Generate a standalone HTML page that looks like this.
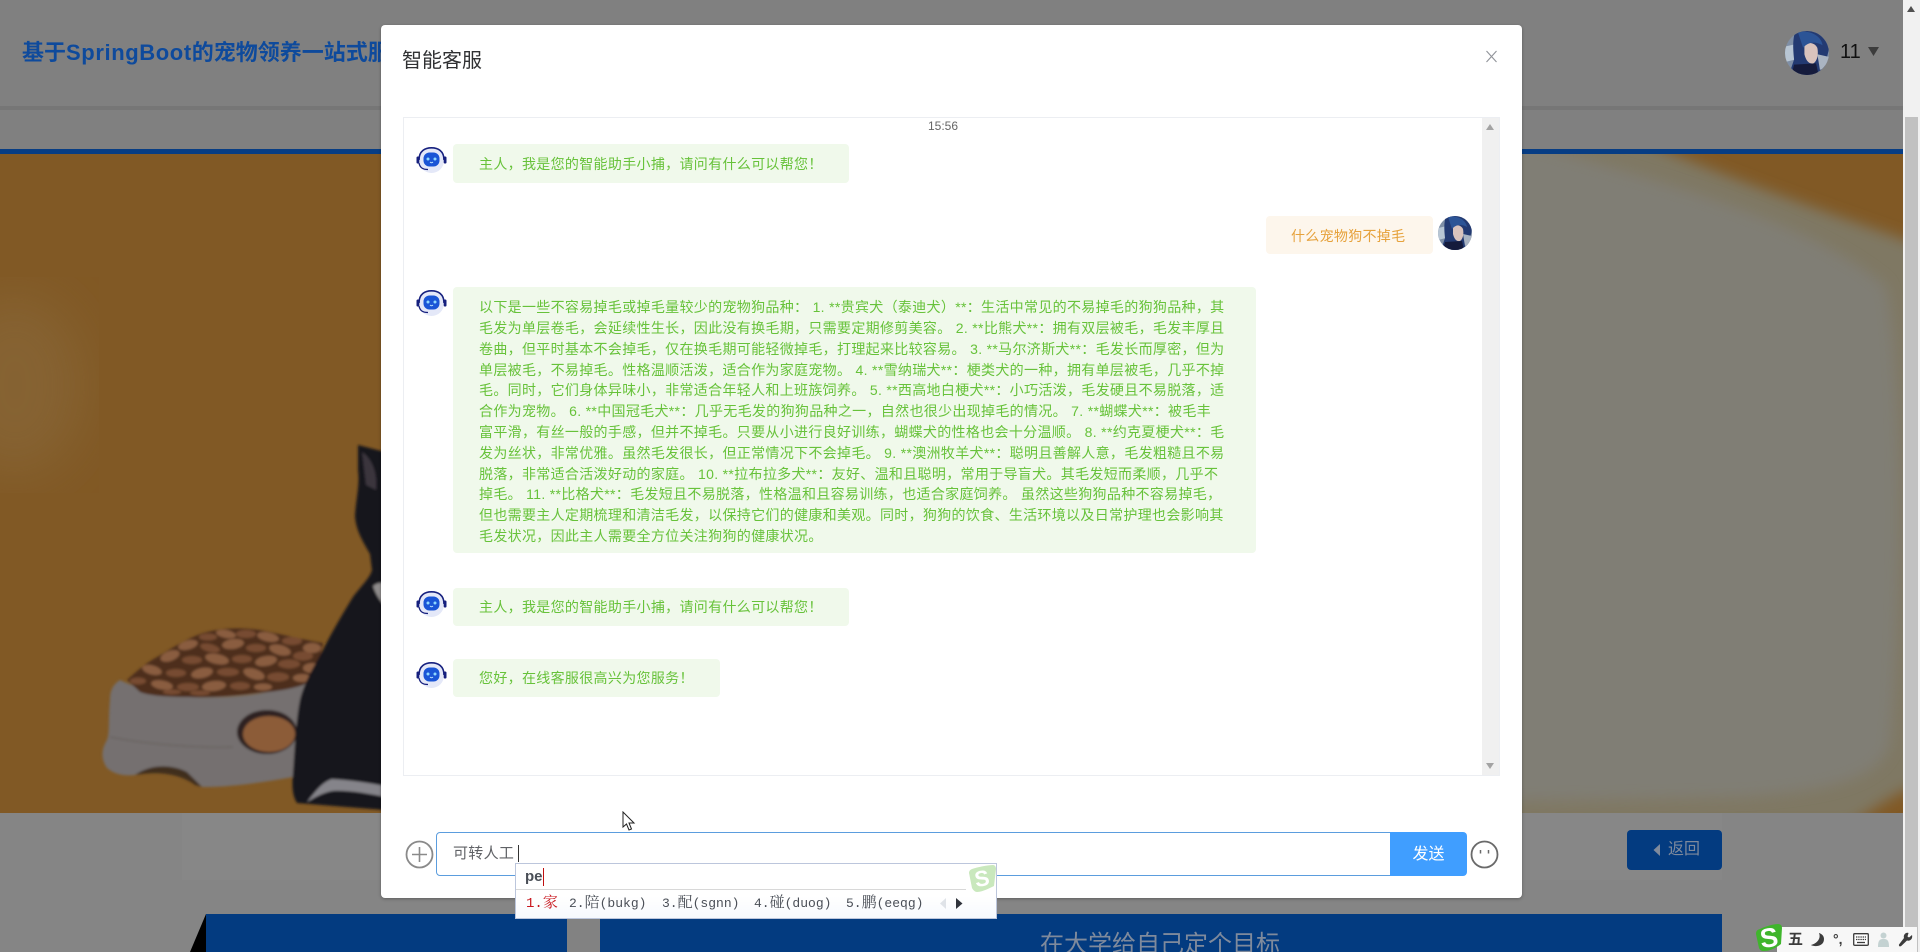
<!DOCTYPE html>
<html lang="zh-CN"><head><meta charset="utf-8"><title>智能客服</title>
<style>
html,body{margin:0;padding:0;width:1920px;height:952px;overflow:hidden;background:#858585}
*{box-sizing:border-box}
body{position:relative;font-family:"Liberation Sans","Noto Sans CJK SC",sans-serif;font-size:14px}
.a{position:absolute}
.t{position:absolute;white-space:nowrap}
.b{position:absolute;border-radius:4px}
.g{background:#f0f9eb;color:#67c23a}
.o{background:#fdf6ec;color:#e6a23c}
.l{position:absolute;left:479px;white-space:nowrap;line-height:21px;height:21px;color:#67c23a;letter-spacing:.32px}
.c{position:absolute;top:894px;line-height:20px;white-space:nowrap;font-family:"Liberation Mono","Noto Serif CJK SC",monospace;font-size:13px;color:#4a4f57}
.c i{font-style:normal;font-size:15px}
</style></head><body>

<!-- dimmed page behind -->
<div class="a" style="left:0;top:0;width:1903px;height:106px;background:#808080"></div>
<div class="a" style="left:0;top:106px;width:1903px;height:4px;background:#767676"></div>
<div class="a" style="left:0;top:110px;width:1903px;height:40px;background:#808080"></div>
<div class="a" style="left:0;top:149px;width:1903px;height:5px;background:#073d84"></div>

<svg class="a" style="left:0;top:0" width="1903" height="952" viewBox="0 0 1903 952">
<defs>
<filter id="bl" x="-10%" y="-10%" width="120%" height="120%"><feGaussianBlur stdDeviation="7"/></filter>
<filter id="bs" x="-5%" y="-5%" width="110%" height="110%"><feGaussianBlur stdDeviation="1.3"/></filter>
<filter id="bh"><feGaussianBlur stdDeviation="25"/></filter>
<clipPath id="imgc"><rect x="0" y="154" width="1903" height="659"/></clipPath>
</defs>
<g clip-path="url(#imgc)">
<rect x="0" y="154" width="1903" height="659" fill="#815925"/>
<ellipse cx="15" cy="385" rx="70" ry="90" fill="#8a6a3c" opacity=".55" filter="url(#bh)"/>
<!-- cream bed -->
<path d="M1000 140 L1640 140 C1720 175 1820 210 1920 245 L1920 785 C1900 790 1880 805 1850 825 L1000 825Z" fill="#7f7863" filter="url(#bl)"/>
<path d="M1000 130 L1520 140 C1650 180 1800 215 1885 285 C1903 340 1903 620 1890 745 C1878 782 1820 792 1740 797 L1000 810Z" fill="#807e75" filter="url(#bl)"/>
<!-- bowl -->
<g filter="url(#bs)">
<path d="M120 680 C112 685 110 692 110 700 C108 720 110 732 107 740 C102 748 100 758 107 768 C115 775 125 776 135 775 C150 766 172 766 187 773 C193 778 198 783 202 787 C235 787 265 782 293 777 L320 690 Q312 684 307 683 C250 700 170 705 120 680Z" fill="#75706f"/>
<path d="M110 737 C150 745 200 748 233 747" stroke="#6a6563" stroke-width="1.5" fill="none"/>
<path d="M135 775 C150 764 172 764 187 772 L202 787 L195 785 C180 774 160 771 135 775Z" fill="#3f2d1c"/>
<path d="M127 680 C140 668 148 662 157 657 C172 648 188 638 203 633 C220 628 240 627 260 630 C280 634 305 640 323 643 L317 673 L303 685 C288 690 270 692 257 693 C235 696 210 698 190 697 C170 697 150 696 140 692Z" fill="#4d2f1d"/>
<g fill="#8a5d40">
<ellipse cx="226" cy="634" rx="10" ry="4" transform="rotate(10 226 634)"/><ellipse cx="268" cy="637" rx="11" ry="4.5" transform="rotate(12 268 637)"/><ellipse cx="312" cy="648" rx="9" ry="5"/>
<ellipse cx="188" cy="645" rx="10" ry="4.5" transform="rotate(-15 188 645)"/><ellipse cx="233" cy="644" rx="11" ry="5" transform="rotate(-8 233 644)"/><ellipse cx="280" cy="650" rx="11" ry="5" transform="rotate(15 280 650)"/>
<ellipse cx="170" cy="656" rx="10" ry="5" transform="rotate(-20 170 656)"/><ellipse cx="217" cy="659" rx="12" ry="5" transform="rotate(12 217 659)"/><ellipse cx="266" cy="661" rx="11" ry="5" transform="rotate(-10 266 661)"/><ellipse cx="312" cy="668" rx="9" ry="5"/>
<ellipse cx="152" cy="670" rx="10" ry="4.5" transform="rotate(15 152 670)"/><ellipse cx="202" cy="673" rx="11" ry="5" transform="rotate(-12 202 673)"/><ellipse cx="254" cy="674" rx="11" ry="5" transform="rotate(18 254 674)"/><ellipse cx="302" cy="678" rx="9" ry="4"/>
<ellipse cx="162" cy="685" rx="11" ry="4.5" transform="rotate(10 162 685)"/><ellipse cx="214" cy="686" rx="12" ry="5" transform="rotate(-6 214 686)"/><ellipse cx="263" cy="687" rx="9" ry="3.5"/>
</g>
<g fill="#774b30">
<ellipse cx="208" cy="637" rx="9" ry="3.5"/><ellipse cx="246" cy="634" rx="10" ry="4"/><ellipse cx="292" cy="641" rx="10" ry="4"/>
<ellipse cx="210" cy="648" rx="10" ry="4" transform="rotate(14 210 648)"/><ellipse cx="256" cy="648" rx="10" ry="4"/><ellipse cx="303" cy="656" rx="10" ry="4.5"/>
<ellipse cx="192" cy="660" rx="10" ry="4"/><ellipse cx="242" cy="659" rx="10" ry="4"/><ellipse cx="289" cy="664" rx="11" ry="4.5"/>
<ellipse cx="176" cy="673" rx="10" ry="4"/><ellipse cx="228" cy="672" rx="11" ry="4"/><ellipse cx="278" cy="677" rx="11" ry="4.5"/>
<ellipse cx="138" cy="681" rx="8" ry="3.5"/><ellipse cx="188" cy="687" rx="11" ry="4"/><ellipse cx="240" cy="686" rx="10" ry="4"/>
<ellipse cx="172" cy="692" rx="9" ry="2.5"/><ellipse cx="200" cy="693" rx="10" ry="2.5"/>
</g>
<ellipse cx="267" cy="732" rx="30" ry="22" fill="#2f2320"/>
<ellipse cx="269" cy="734" rx="26" ry="18" fill="#8c5c38"/>
<!-- cat -->
<path d="M358 445 L385 452 L385 810 L297 803 C292 795 292 785 293 773 C295 745 296 720 300 700 C305 680 315 665 323 650 C333 630 345 610 353 597 C362 585 370 578 372 570 L370 554 C362 540 356 530 355 516 C356 498 360 485 358 470Z" fill="#17141a"/>
<path d="M362 452 C370 457 378 470 376 490 L366 485Z" fill="#3a343c"/>
<path d="M373 586 C378 582 383 582 385 585 L385 606 C380 601 375 593 373 586Z" fill="#8f8c8c"/>
<path d="M307 802 C315 792 322 782 332 779 C350 780 370 783 385 786 L385 797 C365 793 348 790 332 791 C322 793 314 798 307 802Z" fill="#85848a"/>
</g>
</g>
<!-- bottom -->
<rect x="182" y="813" width="1540" height="67" fill="#878787"/>
<path d="M206 914 L206 952 L190 952Z" fill="#000"/>
<rect x="206" y="914" width="361" height="38" fill="#033b80"/>
<rect x="567" y="914" width="33" height="38" fill="#828282"/>
<rect x="600" y="914" width="1122" height="38" fill="#033b80"/>
</svg>

<div class="b" style="left:1627px;top:830px;width:95px;height:40px;background:#033b80"></div>
<svg class="a" style="left:1652px;top:843px" width="9" height="14" viewBox="0 0 9 14"><path d="M8 1 L1.5 7 L8 13Z" fill="#7f8a9c"/></svg>
<div class="t" style="left:1668px;top:840px;line-height:20px;font-size:16px;color:#7f8a9c">返回</div>
<div class="t" style="left:1040px;top:927px;line-height:36px;font-size:24px;color:#7f8a9c">在大学给自己定个目标</div>

<div class="t" style="left:22px;top:37px;line-height:32px;font-size:22px;font-weight:700;color:#0e4a9c">基于<span style="letter-spacing:.6px">SpringBoot</span>的宠物领养一站式服务</div>

<svg class="a" style="left:1785px;top:31px" width="44" height="44" viewBox="0 0 34 34"><use href="#ava"/></svg>
<div class="t" style="left:1840px;top:40px;line-height:24px;font-size:20px;color:#111">11</div>
<svg class="a" style="left:1868px;top:47px" width="11" height="9"><path d="M0 0H11L5.5 9Z" fill="#3c3c3c"/></svg>

<!-- page scrollbar -->
<div class="a" style="left:1903px;top:0;width:17px;height:952px;background:#f1f1f1"></div>
<div class="a" style="left:1905px;top:117px;width:13px;height:835px;background:#c1c1c1"></div>
<svg class="a" style="left:1907px;top:6px" width="8" height="6"><path d="M4 0L8 6H0Z" fill="#505050"/></svg>

<!-- icons -->
<svg width="0" height="0" style="position:absolute">
<defs>
<symbol id="rob" viewBox="0 0 31 26">
<ellipse cx="15.5" cy="13.5" rx="12.5" ry="12.5" fill="#e4e8f8"/>
<path d="M3 13 C3 4 9 .8 15.5 .8 C22 .8 28 4 28 13" fill="none" stroke="#16207e" stroke-width="1.6"/>
<rect x="0.5" y="9.5" width="2.8" height="7" rx="1.3" fill="#16207e"/>
<rect x="27.7" y="9.5" width="2.8" height="7" rx="1.3" fill="#16207e"/>
<path d="M3 16 C4 21 7 22.5 12 22.5" fill="none" stroke="#16207e" stroke-width="1.3"/>
<rect x="7.5" y="5.5" width="16" height="14" rx="6" fill="#1a55d6"/>
<circle cx="12" cy="12" r="1.5" fill="#8fd8ff"/><circle cx="19" cy="12" r="1.5" fill="#8fd8ff"/>
<path d="M14 15 Q15.5 16.5 17 15" stroke="#bfe6ff" stroke-width=".9" fill="none"/>
</symbol>
<symbol id="ava" viewBox="0 0 34 34">
<clipPath id="cc"><circle cx="17" cy="17" r="17"/></clipPath>
<g clip-path="url(#cc)">
<rect width="34" height="34" fill="#7f8fa6"/>
<path d="M0 12 L9 10 L8 22 L0 24Z" fill="#b8c6d4"/>
<path d="M8 0 L34 0 L34 14 L29 34 L3 34 L7 22 C6 12 6 6 8 0Z" fill="#233a72"/>
<path d="M15 11 C18 8 23 9 25 13 C26 18 25 23 22 25 C18 26 16 22 15 18Z" fill="#d9c3bd"/>
<path d="M10 1 C18 -1 28 3 29 11 C24 8 18 8 14 13Z" fill="#2c5496"/>
<path d="M7 26 L24 25 L26 34 L5 34Z" fill="#151b3c"/>
<path d="M25 18 L34 20 L34 28 L27 30Z" fill="#aab4c2"/>
</g>
</symbol>
</defs>
</svg>

<!-- modal -->
<div class="a" style="left:381px;top:25px;width:1141px;height:873px;background:#fff;border-radius:4px;box-shadow:0 1px 3px rgba(0,0,0,.3)"></div>
<div class="t" style="left:402px;top:47px;line-height:28px;font-size:20px;color:#303133">智能客服</div>
<svg class="a" style="left:1485px;top:50px" width="13" height="13" viewBox="0 0 13 13"><path d="M1.5 1 L11.5 12 M11.5 1 L1.5 12" stroke="#909399" stroke-width="1.1" fill="none"/></svg>

<div class="a" style="left:403px;top:117px;width:1097px;height:659px;border:1px solid #eceef2;background:#fff"></div>
<div class="a" style="left:1482px;top:118px;width:17px;height:657px;background:#f0f0f0"></div>
<svg class="a" style="left:1486px;top:124px" width="8" height="6"><path d="M4 0L8 6H0Z" fill="#a3a3a3"/></svg>
<svg class="a" style="left:1486px;top:763px" width="8" height="6"><path d="M0 0H8L4 6Z" fill="#a3a3a3"/></svg>

<div class="t" style="left:928px;top:117px;line-height:18px;font-size:12px;color:#666">15:56</div>

<svg class="a" style="left:416px;top:147px" width="31" height="26"><use href="#rob"/></svg>
<div class="b g" style="left:453px;top:144px;width:396px;height:39px"></div>
<div class="t" style="left:479px;top:154px;line-height:21px;color:#67c23a;letter-spacing:.32px">主人&#xFF0C;我是您的智能助手小捕&#xFF0C;请问有什么可以帮您&#xFF01;</div>

<div class="b o" style="left:1266px;top:216px;width:167px;height:38px"></div>
<div class="t" style="left:1291px;top:226px;line-height:21px;color:#e6a23c;letter-spacing:.3px">什么宠物狗不掉毛</div>
<svg class="a" style="left:1438px;top:216px" width="34" height="34"><use href="#ava"/></svg>

<svg class="a" style="left:416px;top:290px" width="31" height="26"><use href="#rob"/></svg>
<div class="b g" style="left:453px;top:287px;width:803px;height:266px"></div>
<div class="l" style="top:297px">以下是一些不容易掉毛或掉毛量较少的宠物狗品种&#xFF1A; 1. **贵宾犬&#xFF08;泰迪犬&#xFF09;**&#xFF1A;生活中常见的不易掉毛的狗狗品种&#xFF0C;其</div>
<div class="l" style="top:318px">毛发为单层卷毛&#xFF0C;会延续性生长&#xFF0C;因此没有换毛期&#xFF0C;只需要定期修剪美容。 2. **比熊犬**&#xFF1A;拥有双层被毛&#xFF0C;毛发丰厚且</div>
<div class="l" style="top:339px">卷曲&#xFF0C;但平时基本不会掉毛&#xFF0C;仅在换毛期可能轻微掉毛&#xFF0C;打理起来比较容易。 3. **马尔济斯犬**&#xFF1A;毛发长而厚密&#xFF0C;但为</div>
<div class="l" style="top:360px">单层被毛&#xFF0C;不易掉毛。性格温顺活泼&#xFF0C;适合作为家庭宠物。 4. **雪纳瑞犬**&#xFF1A;梗类犬的一种&#xFF0C;拥有单层被毛&#xFF0C;几乎不掉</div>
<div class="l" style="top:380px">毛。同时&#xFF0C;它们身体异味小&#xFF0C;非常适合年轻人和上班族饲养。 5. **西高地白梗犬**&#xFF1A;小巧活泼&#xFF0C;毛发硬且不易脱落&#xFF0C;适</div>
<div class="l" style="top:401px">合作为宠物。 6. **中国冠毛犬**&#xFF1A;几乎无毛发的狗狗品种之一&#xFF0C;自然也很少出现掉毛的情况。 7. **蝴蝶犬**&#xFF1A;被毛丰</div>
<div class="l" style="top:422px">富平滑&#xFF0C;有丝一般的手感&#xFF0C;但并不掉毛。只要从小进行良好训练&#xFF0C;蝴蝶犬的性格也会十分温顺。 8. **约克夏梗犬**&#xFF1A;毛</div>
<div class="l" style="top:443px">发为丝状&#xFF0C;非常优雅。虽然毛发很长&#xFF0C;但正常情况下不会掉毛。 9. **澳洲牧羊犬**&#xFF1A;聪明且善解人意&#xFF0C;毛发粗糙且不易</div>
<div class="l" style="top:464px">脱落&#xFF0C;非常适合活泼好动的家庭。 10. **拉布拉多犬**&#xFF1A;友好、温和且聪明&#xFF0C;常用于导盲犬。其毛发短而柔顺&#xFF0C;几乎不</div>
<div class="l" style="top:484px">掉毛。 11. **比格犬**&#xFF1A;毛发短且不易脱落&#xFF0C;性格温和且容易训练&#xFF0C;也适合家庭饲养。 虽然这些狗狗品种不容易掉毛&#xFF0C;</div>
<div class="l" style="top:505px">但也需要主人定期梳理和清洁毛发&#xFF0C;以保持它们的健康和美观。同时&#xFF0C;狗狗的饮食、生活环境以及日常护理也会影响其</div>
<div class="l" style="top:526px">毛发状况&#xFF0C;因此主人需要全方位关注狗狗的健康状况。</div>

<svg class="a" style="left:416px;top:591px" width="31" height="26"><use href="#rob"/></svg>
<div class="b g" style="left:453px;top:588px;width:396px;height:38px"></div>
<div class="t" style="left:479px;top:597px;line-height:21px;color:#67c23a;letter-spacing:.32px">主人&#xFF0C;我是您的智能助手小捕&#xFF0C;请问有什么可以帮您&#xFF01;</div>

<svg class="a" style="left:416px;top:662px" width="31" height="26"><use href="#rob"/></svg>
<div class="b g" style="left:453px;top:659px;width:267px;height:38px"></div>
<div class="t" style="left:479px;top:668px;line-height:21px;color:#67c23a;letter-spacing:.32px">您好&#xFF0C;在线客服很高兴为您服务&#xFF01;</div>

<!-- input -->
<svg class="a" style="left:405px;top:840px" width="29" height="29" viewBox="0 0 29 29"><circle cx="14.5" cy="14.5" r="13" fill="none" stroke="#8a8a8a" stroke-width="1.8"/><path d="M14.5 7V22M7 14.5H22" stroke="#8a8a8a" stroke-width="1.6"/></svg>
<div class="a" style="left:436px;top:832px;width:955px;height:44px;border:1px solid #5b9dde;border-radius:4px 0 0 4px;background:#fff"></div>
<div class="t" style="left:453px;top:843px;line-height:21px;color:#606266;font-size:15px;letter-spacing:.3px">可转人工</div>
<div class="a" style="left:518px;top:845px;width:1px;height:17px;background:#333"></div>
<div class="a" style="left:1390px;top:832px;width:77px;height:44px;background:#409eff;border-radius:0 4px 4px 0;color:#fff;text-align:center;line-height:45px;font-size:16px">发送</div>
<svg class="a" style="left:1470px;top:840px" width="29" height="29" viewBox="0 0 29 29"><circle cx="14.5" cy="14.5" r="13" fill="#fff" stroke="#6a6a6a" stroke-width="1.8"/><path d="M10.5 10V13.5M18.5 10V13.5" stroke="#6a6a6a" stroke-width="1.5"/></svg>

<!-- IME candidate window -->
<div class="a" style="left:515px;top:863px;width:482px;height:56px;background:linear-gradient(#fff,#fff 60%,#f6f9fd);border:1px solid #bcc6dc"></div>
<div class="a" style="left:516px;top:889px;width:450px;height:1px;background:#d8d8d8"></div>
<div class="t" style="left:525px;top:867px;line-height:20px;font-size:15px;font-weight:700;color:#4a4f57">pe</div>
<div class="a" style="left:543px;top:868px;width:1px;height:18px;background:#c01010"></div>
<div class="c" style="left:526px;color:#c8161d;font-size:14px">1.<i>家</i></div>
<div class="c" style="left:569px">2.<i>陪</i>(bukg)</div>
<div class="c" style="left:662px">3.<i>配</i>(sgnn)</div>
<div class="c" style="left:754px">4.<i>碰</i>(duog)</div>
<div class="c" style="left:846px">5.<i>鹏</i>(eeqg)</div>
<svg class="a" style="left:940px;top:898px" width="7" height="11"><path d="M6 0V11L0 5.5Z" fill="#dfe3e8"/></svg>
<svg class="a" style="left:956px;top:898px" width="7" height="11"><path d="M0 0V11L6.5 5.5Z" fill="#30343c"/></svg>
<svg class="a" style="left:966px;top:864px" width="31" height="30" viewBox="0 0 31 30"><path d="M6 5 C12 3 22 1 27 1 C29 1 30 3 30 5 L28 22 C24 24 16 28 11 28 C9 28 7 26 6 24 L3 9 C3 7 4 6 6 5Z" fill="#c9e8bd"/><text x="16" y="22" text-anchor="middle" font-family="Liberation Sans" font-weight="700" font-size="22" fill="#fff" transform="rotate(-10 16 15)">S</text></svg>

<!-- IME status bar -->
<div class="a" style="left:1777px;top:927px;width:140px;height:25px;background:#f7f7f7"></div>
<svg class="a" style="left:1755px;top:923px" width="28" height="29" viewBox="0 0 28 29"><path d="M5 6 C11 3 19 1 23 1 C26 1 27 3 27 5 L26 21 C21 25 15 28 9 28 C6 28 5 27 4 25 L1 11 C1 8 2 7 5 6Z" fill="#3fb52c"/><text x="14" y="24" text-anchor="middle" font-family="Liberation Sans" font-weight="700" font-size="27" fill="#fff" transform="rotate(-8 14 15)">S</text></svg>
<div class="t" style="left:1788px;top:930px;line-height:20px;font-size:15px;font-weight:700;color:#3c3c3c">五</div>
<svg class="a" style="left:1810px;top:932px" width="15" height="15" viewBox="0 0 15 15"><path d="M9 1 C13 5 12 13 1 13 C4 15 14 15 14 7 C14 4 12 2 9 1Z" fill="#3c3c3c"/><path d="M9 1 C11 6 8 11 1 13 C7 14 13 12 13 7 C13 4 11 2 9 1Z" fill="#3c3c3c"/></svg>
<div class="t" style="left:1833px;top:929px;line-height:20px;font-size:14px;font-weight:700;color:#3c3c3c">°,</div>
<svg class="a" style="left:1853px;top:933px" width="16" height="13" viewBox="0 0 16 13"><rect x=".7" y=".7" width="14.6" height="11.6" rx="1" fill="#fff" stroke="#3c3c3c" stroke-width="1.3"/><path d="M3 4H13M3 6.5H13" stroke="#3c3c3c" stroke-width="1.2" stroke-dasharray="1.4 .8"/><path d="M4 9.5H12" stroke="#3c3c3c" stroke-width="1.3"/></svg>
<svg class="a" style="left:1877px;top:932px" width="13" height="15" viewBox="0 0 13 15"><circle cx="6.5" cy="3.5" r="3" fill="#c4d2d2"/><path d="M1 15 C1 8 3 7 6.5 7 C10 7 12 8 12 15Z" fill="#c4d2d2"/></svg>
<svg class="a" style="left:1898px;top:932px" width="15" height="15" viewBox="0 0 15 15"><path d="M14 3 L11 5.5 L9.5 4.5 L10.5 1 C7.5 0 5 3 6 6 L1 12.5 C.5 14 2 15 3.2 14 L9 8.5 C12 9.5 15 7 14 3Z" fill="#3c3c3c"/></svg>

<!-- cursor -->
<svg class="a" style="left:622px;top:811px" width="14" height="21" viewBox="0 0 14 21"><path d="M1 1 V16 L4.5 13 L7 19 L9.5 18 L7 12 L12 12Z" fill="#fff" stroke="#222" stroke-width="1"/></svg>

</body></html>
